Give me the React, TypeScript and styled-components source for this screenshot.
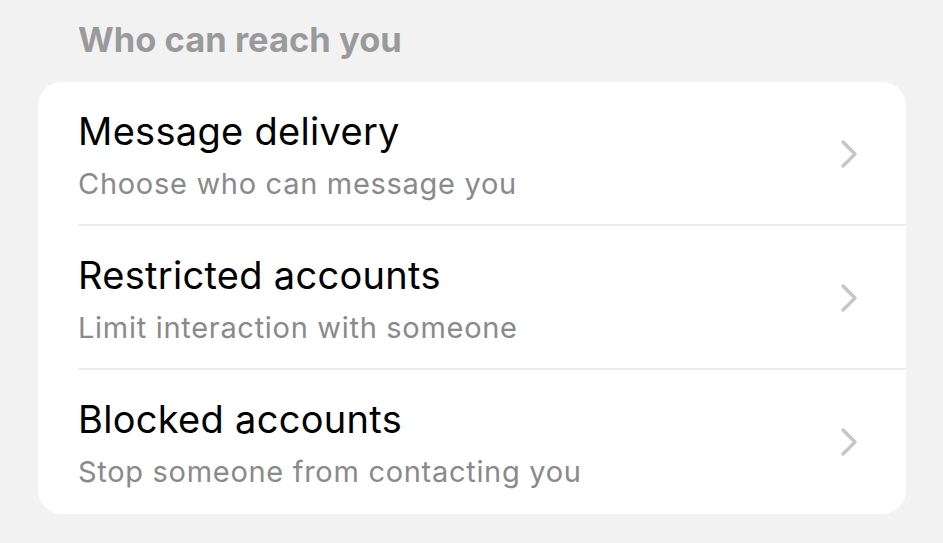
import React from "react";
import styled, { createGlobalStyle } from "styled-components";

const Global = createGlobalStyle`
  html, body { margin: 0; padding: 0; background: #f2f2f2; }
  body { font-family: Inter, "Noto Sans", sans-serif; -webkit-font-smoothing: antialiased; }
`;

const Page = styled.div`
  width: 943px;
  height: 543px;
  box-sizing: border-box;
  padding: 0 37px 0 38px;
  display: flex;
  flex-direction: column;
  overflow: hidden;
`;

const SectionHeader = styled.div`
  padding: 19px 0 0 40px;
  height: 82px;
  box-sizing: border-box;
  font-size: 34.5px;
  line-height: 42px;
  font-weight: 700;
  color: #9a9a9a;
`;

const Card = styled.div`
  background: #ffffff;
  border-radius: 24px;
  overflow: hidden;
  display: flex;
  flex-direction: column;
`;

const Row = styled.div<{ $last?: boolean }>`
  height: 144px;
  box-sizing: border-box;
  padding: 0 48px 0 40px;
  display: flex;
  align-items: center;
  position: relative;
  &::after {
    content: "";
    display: ${(p) => (p.$last ? "none" : "block")};
    position: absolute;
    left: 40px;
    right: 0;
    bottom: 0;
    height: 2px;
    background: #ececec;
  }
`;

const Texts = styled.div`
  flex: 1;
  display: flex;
  flex-direction: column;
  gap: 13px;
`;

const Title = styled.div`
  font-size: 38px;
  line-height: 46px;
  letter-spacing: 0.3px;
  color: #000;
  font-weight: 400;
`;

const Subtitle = styled.div`
  font-size: 29px;
  line-height: 34px;
  letter-spacing: 0.7px;
  color: #8a8a8a;
`;

const Chevron = () => (
  <svg width="18" height="30" viewBox="0 0 18 30" fill="none">
    <path d="M3 3 L15 15 L3 27" stroke="#c7c7c7" strokeWidth="3.5" strokeLinecap="round" strokeLinejoin="round" />
  </svg>
);

const items = [
  { title: "Message delivery", sub: "Choose who can message you" },
  { title: "Restricted accounts", sub: "Limit interaction with someone" },
  { title: "Blocked accounts", sub: "Stop someone from contacting you" },
];

export default function App() {
  return (
    <Page>
      <Global />
      <SectionHeader>Who can reach you</SectionHeader>
      <Card>
        {items.map((it, i) => (
          <Row key={it.title} $last={i === items.length - 1}>
            <Texts>
              <Title>{it.title}</Title>
              <Subtitle>{it.sub}</Subtitle>
            </Texts>
            <Chevron />
          </Row>
        ))}
      </Card>
    </Page>
  );
}
